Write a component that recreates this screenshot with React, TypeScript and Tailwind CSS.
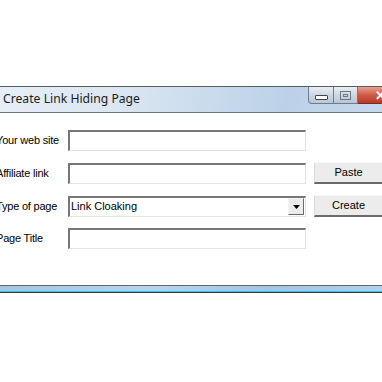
import React from "react";

const labelCls =
  "w-[72px] -ml-[4px] shrink-0 text-[11px] leading-none text-black tracking-[-0.2px]";
const inputCls =
  "w-[238px] h-[21px] shrink-0 bg-white border-t-2 border-l-2 border-r border-b border-t-[#777777] border-l-[#777777] border-r-[#e3e3e3] border-b-[#e3e3e3]";
const btnCls =
  "w-[68px] h-[22px] shrink-0 ml-[8px] bg-[#ececec] border-t border-l border-t-[#f8f8f8] border-l-[#dcdcdc] border-b-2 border-b-[#6a6a6a] flex items-center justify-center text-[11px] text-black";

export default function App() {
  return (
    <div
      className="w-[382px] h-[382px] bg-white overflow-hidden"
      style={{ fontFamily: '"Liberation Sans", Arial, sans-serif' }}
    >
      <div className="h-[86px]" />
      {/* Title bar */}
      <div className="relative h-[27px] border-t border-t-[#5c5c5c] border-b border-b-[#6b7480] bg-[linear-gradient(100deg,#e6eef7_0%,#dce7f2_30%,#c9dbec_55%,#bcd1e8_75%,#c6d9ec_100%)] flex items-center">
        <span
          className="pl-[3px] text-[12.2px] text-[#1b1b1b] leading-none"
          style={{ fontFamily: '"Noto Sans", "Open Sans", sans-serif' }}
        >
          Create Link Hiding Page
        </span>
        <div className="absolute left-[308px] top-0 flex h-[17px]">
          <div className="w-[26px] h-[17px] rounded-bl-[4px] border border-t-0 border-[#6f7b8a] bg-[linear-gradient(#e9eef3,#cfd8e2_50%,#b9c6d4)] flex items-center justify-center">
            <div className="w-[13px] h-[5px] mt-[5px] border border-[#3d4652] bg-white rounded-[1px]" />
          </div>
          <div className="w-[24px] h-[17px] border-b border-r border-[#6f7b8a] bg-[linear-gradient(#e9eef3,#cfd8e2_50%,#b9c6d4)] flex items-center justify-center">
            <div className="w-[11px] h-[9px] border border-[#6c7786] flex items-center justify-center">
              <div className="w-[5px] h-[3px] border border-[#6c7786]" />
            </div>
          </div>
          <div className="w-[30px] h-[17px] border-b border-[#7a2a22] bg-[linear-gradient(#e8a090,#cf5a45_50%,#b73a28)] flex items-center pl-[17px]">
            <span className="text-white text-[13px] font-bold leading-none">✕</span>
          </div>
        </div>
      </div>
      {/* Body */}
      <div className="h-[172px] bg-white pt-[17px] flex flex-col gap-[11px]">
        <div className="flex items-center">
          <div className={labelCls}>Your web site</div>
          <div className={inputCls} />
        </div>
        <div className="flex items-center">
          <div className={labelCls}>Affiliate link</div>
          <div className={inputCls} />
          <div className={btnCls}>Paste</div>
        </div>
        <div className="flex items-center">
          <div className={labelCls}>Type of page</div>
          <div className={inputCls + " flex items-center justify-between"}>
            <span className="pl-[1px] text-[11px] leading-none">Link Cloaking</span>
            <div className="w-[16px] h-[17px] mr-[1px] bg-[#ececec] border border-t-[#f4f4f4] border-l-[#f4f4f4] border-r-[#6a6a6a] border-b-[#6a6a6a] flex items-center justify-center">
              <svg width="7" height="4" viewBox="0 0 7 4">
                <path d="M0 0h7L3.5 4z" fill="#000" />
              </svg>
            </div>
          </div>
          <div className={btnCls}>Create</div>
        </div>
        <div className="flex items-center">
          <div className={labelCls}>Page Title</div>
          <div className={inputCls} />
        </div>
      </div>
      {/* Bottom frame */}
      <div className="h-[1px] bg-[#5e6670]" />
      <div className="h-[5px] bg-[linear-gradient(100deg,#a8c4e0_0%,#b9d3ec_40%,#a6c3e2_70%,#b4cfea_100%)]" />
      <div className="h-[1px] bg-[#2ec3f2]" />
      <div className="h-[1px] bg-[#2a3a48]" />
    </div>
  );
}
